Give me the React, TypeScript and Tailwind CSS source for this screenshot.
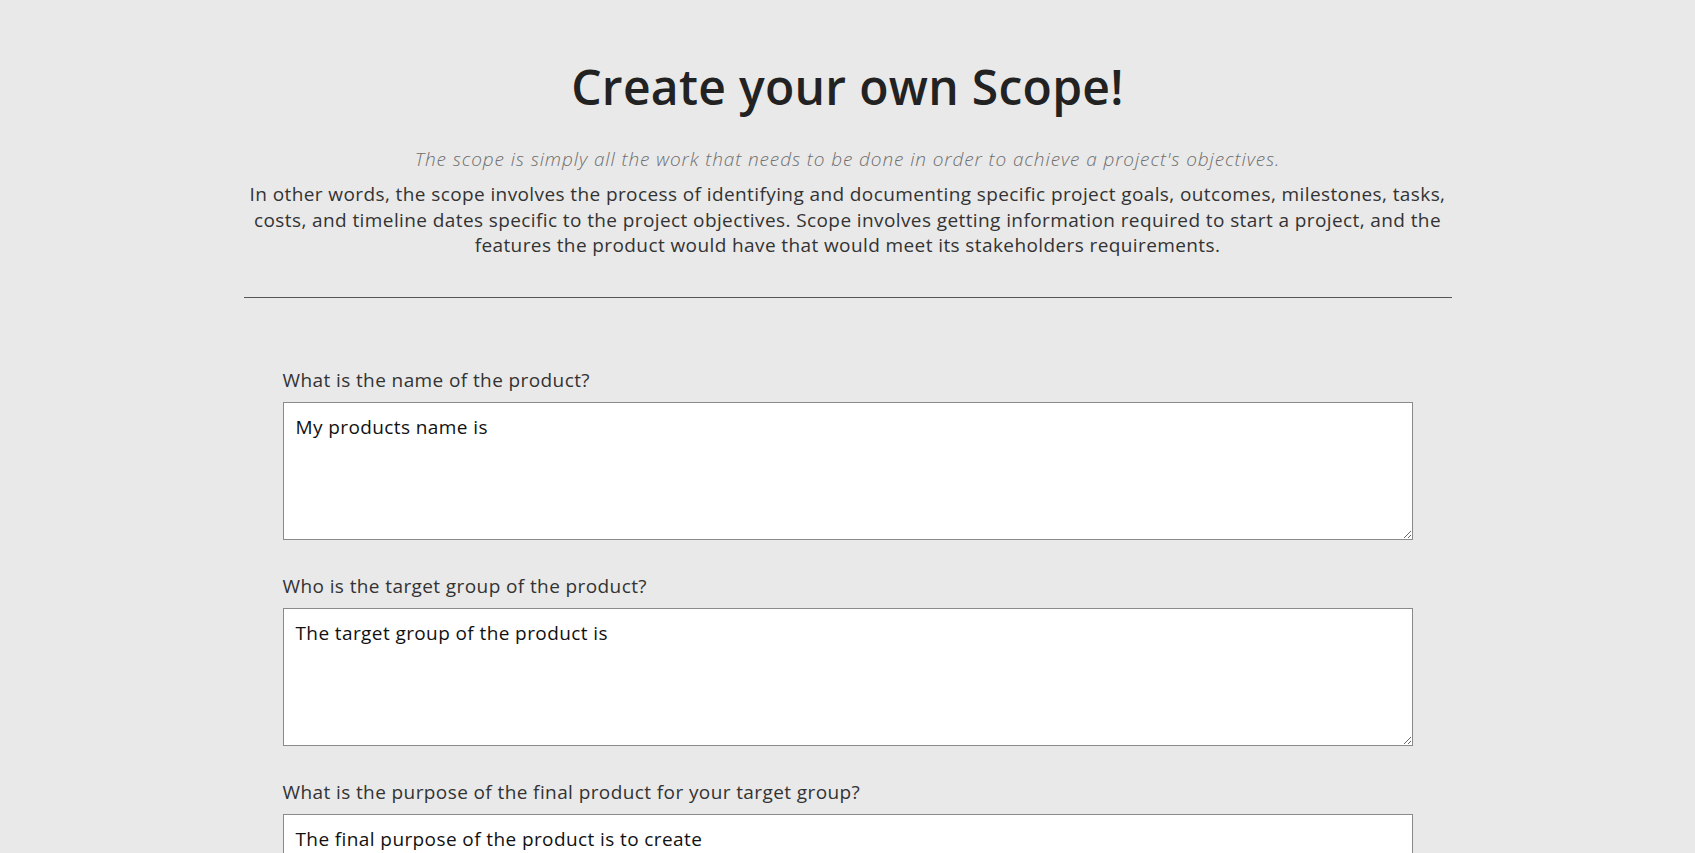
import React from 'react'

const questions = [
  { label: 'What is the name of the product?', value: 'My products name is' },
  { label: 'Who is the target group of the product?', value: 'The target group of the product is' },
  { label: 'What is the purpose of the final product for your target group?', value: 'The final purpose of the product is to create' },
]

export default function App() {
  return (
    <div className="min-h-screen bg-[#e9e9e9] text-[#222] font-['Open_Sans',sans-serif]">
      <div className="mx-auto w-[1208px] pt-[58px]">
        <h1 className="text-center text-[48px] font-semibold leading-[58px] tracking-[0.3px] text-[#222]">
          Create your own Scope!
        </h1>
        <p className="mt-[30px] text-center text-[19px] font-light italic leading-[26px] tracking-[0.9px] text-[#6f6f6f]">
          The scope is simply all the work that needs to be done in order to achieve a project's objectives.
        </p>
        <p className="mt-[10px] px-1 text-center text-[19px] leading-[25.5px] tracking-[0.4px] text-[#333]">
          In other words, the scope involves the process of identifying and documenting specific project goals, outcomes, milestones, tasks, costs, and timeline dates specific to the project objectives. Scope involves getting information required to start a project, and the features the product would have that would meet its stakeholders requirements.
        </p>
        <hr className="mt-[38px] border-t border-[#555]" />
        <form className="px-[39px] pt-[69px]">
          {questions.map((q) => (
            <div key={q.label} className="mb-[33px]">
              <label className="block text-[19px] leading-[26px] tracking-[0.4px] text-[#333]">{q.label}</label>
              <textarea
                defaultValue={q.value}
                className="mt-[9px] block h-[138px] w-full resize-y border border-[#8a8a8a] bg-white px-3 py-3 text-[19px] leading-[24px] tracking-[0.4px] text-[#111] outline-none"
              />
            </div>
          ))}
        </form>
      </div>
    </div>
  )
}
